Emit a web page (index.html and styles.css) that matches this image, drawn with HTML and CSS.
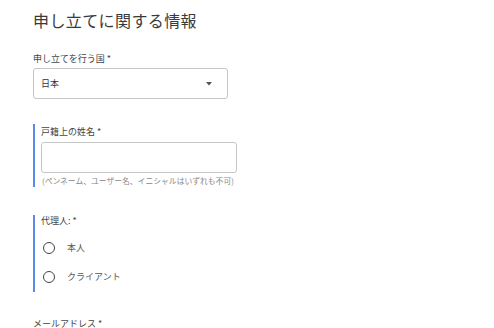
FILE: index.html
```html
<!DOCTYPE html>
<html lang="ja">
<head>
<meta charset="utf-8">
<link rel="stylesheet" href="styles.css">
</head>
<body>
<div class="page">
  <h1 class="title">申し立てに関する情報</h1>

  <div class="field">
    <div class="label">申し立てを行う国 *</div>
    <div class="select">
      <span>日本</span>
      <svg class="caret" width="6" height="4" viewBox="0 0 6 4"><path d="M0 0h6L3 3.5z" fill="#555"/></svg>
    </div>
  </div>

  <div class="group name-group">
    <div class="label">戸籍上の姓名 *</div>
    <div class="input"></div>
    <div class="hint">(ペンネーム、ユーザー名、イニシャルはいずれも不可)</div>
  </div>

  <div class="group agent-group">
    <div class="label">代理人: *</div>
    <div class="radios">
      <div class="radio"><span class="circle"></span><span>本人</span></div>
      <div class="radio"><span class="circle"></span><span>クライアント</span></div>
    </div>
  </div>

  <div class="label email">メールアドレス *</div>
</div>
</body>
</html>
```

FILE: styles.css
```css
* { box-sizing: border-box; }
html, body { margin: 0; padding: 0; background: #fff; }
body {
  font-family: "Noto Sans CJK JP", "Noto Sans", Roboto, sans-serif;
  color: #333;
  overflow: hidden;
}
.page {
  padding: 8px 0 0 33px;
}
.title {
  margin: 0;
  font-size: 16px;
  font-weight: 400;
  line-height: 24px;
  letter-spacing: 0.4px;
  color: #3a3a3a;
}
.label {
  font-size: 9px;
  line-height: 12px;
  color: #444;
}
.field {
  margin-top: 21px;
}
.select {
  margin-top: 3px;
  width: 195px;
  height: 31px;
  border: 1px solid #c6c6c6;
  border-radius: 3px;
  display: flex;
  align-items: center;
  justify-content: space-between;
  padding: 0 15px 0 7px;
  font-size: 9px;
  color: #333;
}
.group {
  border-left: 2px solid #5b8bea;
  padding-left: 6px;
}
.name-group {
  margin-top: 25px;
  padding-top: 2px;
  padding-bottom: 0;
}
.name-group .input {
  margin-top: 4px;
  width: 196px;
  height: 31px;
  border: 1px solid #c6c6c6;
  border-radius: 3px;
}
.hint {
  margin-top: 2px;
  margin-left: 1px;
  font-size: 7.8px;
  line-height: 12px;
  color: #888;
}
.agent-group {
  margin-top: 28px;
  padding-top: 0;
  padding-bottom: 9px;
}
.radios {
  display: flex;
  flex-direction: column;
  gap: 17px;
  margin-top: 15px;
}
.radio {
  display: flex;
  align-items: center;
  gap: 12px;
  font-size: 9px;
  line-height: 12px;
  color: #555;
  padding-left: 2px;
}
.circle {
  width: 12px;
  height: 12px;
  border: 1.6px solid #444;
  border-radius: 50%;
}
.email {
  margin-top: 26px;
}
```
